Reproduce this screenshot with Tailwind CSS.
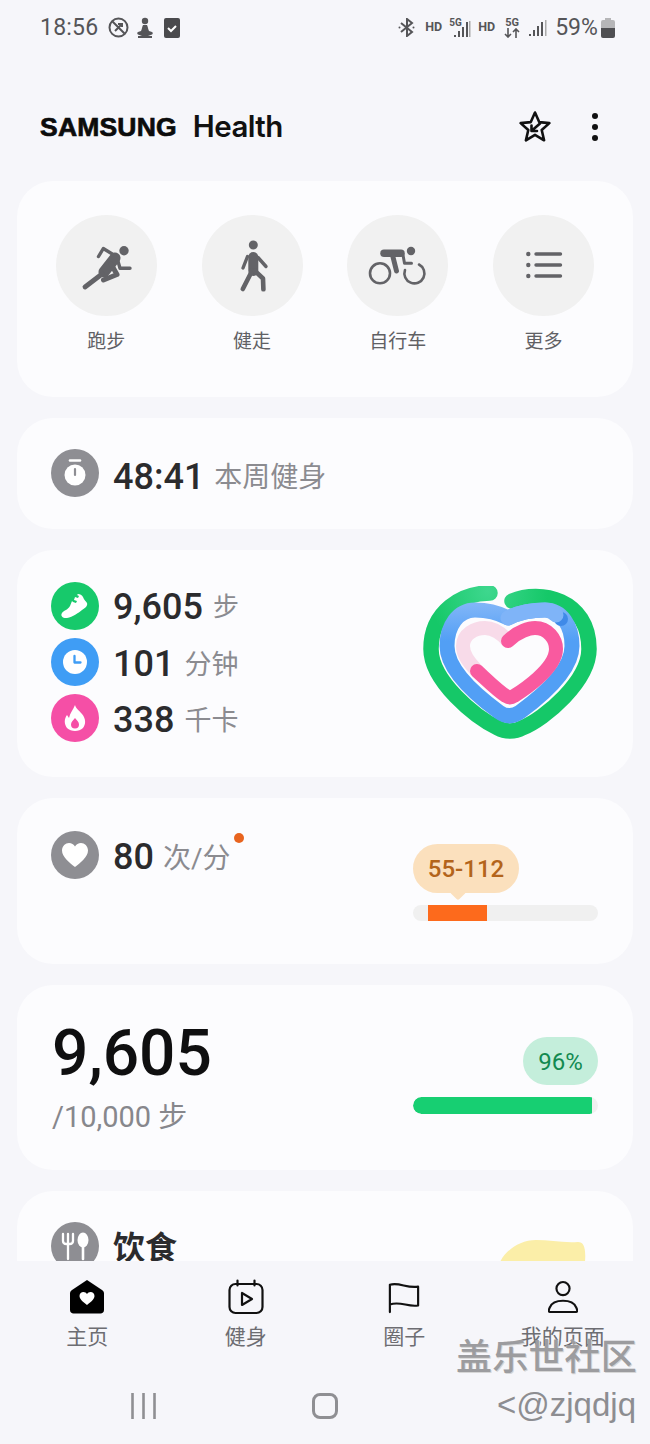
<!doctype html>
<html lang="zh">
<head>
<meta charset="utf-8">
<script src="https://cdn.jsdelivr.net/npm/@tailwindcss/browser@4"></script>
</head>
<body class="m-0">
<div class="relative flex flex-col w-[650px] h-[1444px] overflow-hidden bg-[#f6f6fa] font-['Roboto','Noto_Sans_CJK_SC',sans-serif]">

  <!-- status bar -->
  <div class="h-[55px] shrink-0 flex items-center pl-[40px] text-[#555558]">
    <span class="text-[23px] leading-none tracking-[0.2px]">18:56</span>
    <svg class="ml-[10px]" width="21" height="21" viewBox="0 0 21 21" fill="none" stroke="#555558" stroke-width="2"><circle cx="10.5" cy="10.5" r="9"/><path d="M4.5 4.5l12 12M7 14l7-7M10 7l4 0 0 3"/></svg>
    <svg class="ml-[6px]" width="20" height="21" viewBox="0 0 20 21" fill="#555558"><circle cx="10" cy="4" r="3.200"/><path d="M8 8h4c1 2 1 4 2 6l3 1c1 .5 1 2 0 2.500L13 19h4v2H3v-2h4l-4-1.500c-1-.5-1-2 0-2.500l3-1c1-2 1-4 2-6z"/></svg>
    <svg class="ml-[9px]" width="16" height="20" viewBox="0 0 16 20"><rect width="16" height="20" rx="2" fill="#4a4a4d"/><path d="M4 10l3 3 5-5" stroke="#fff" stroke-width="2" fill="none"/></svg>

    <svg class="ml-[218px]" width="17" height="19" viewBox="0 0 17 19" fill="none" stroke="#555558" stroke-width="2"><path d="M3 5l11 9-5 4V1l5 4-11 9"/><circle cx="1.5" cy="9.5" r="1" fill="#555558" stroke="none"/><circle cx="15.5" cy="9.5" r="1" fill="#555558" stroke="none"/></svg>
    <span class="ml-[10px] text-[12.5px] leading-none font-bold">HD</span>
    <div class="ml-[7px] relative w-[22px] h-[20px]">
      <span class="absolute left-0 top-0 text-[10px] leading-none font-bold">5G</span>
      <svg class="absolute left-0 top-0" width="22" height="20" viewBox="0 0 22 20" fill="#555558"><rect x="5" y="17" width="2" height="2"/><rect x="9" y="13" width="2" height="6"/><rect x="13" y="9" width="2" height="10"/><rect x="17" y="4" width="2" height="15"/><rect x="20" y="3" width="1.5" height="16" fill="#aaa"/></svg>
    </div>
    <span class="ml-[7px] text-[12.5px] leading-none font-bold">HD</span>
    <div class="ml-[9px] w-[16px] h-[20px] flex flex-col items-center">
      <span class="text-[11px] leading-[10px] font-bold">5G</span>
      <svg width="16" height="10" viewBox="0 0 16 10" fill="none" stroke="#555558" stroke-width="1.6"><path d="M4 0v9M1 6l3 3 3-3M12 10V1M9 4l3-3 3 3"/></svg>
    </div>
    <svg class="ml-[9px]" width="18" height="18" viewBox="0 0 18 18" fill="#555558"><rect x="0" y="15" width="2" height="2"/><rect x="4" y="11" width="2" height="6"/><rect x="8" y="7" width="2" height="10"/><rect x="12" y="3" width="2" height="14"/><rect x="16" y="1" width="1.5" height="16" fill="#aaa"/></svg>
    <span class="ml-[8px] text-[23px] leading-none">59%</span>
    <svg class="ml-[3px]" width="14" height="20" viewBox="0 0 14 20"><path d="M4 0h6v2h2a2 2 0 0 1 2 2v6H0V4a2 2 0 0 1 2-2h2z" fill="#b6b6b8"/><path d="M0 10h14v8a2 2 0 0 1-2 2H2a2 2 0 0 1-2-2z" fill="#4f4f52"/></svg>
  </div>

  <!-- header -->
  <div class="h-[126px] shrink-0 flex items-center pl-[40px] pt-[18px]">
    <span class="text-[26.5px] leading-none font-bold tracking-[0.2px] text-[#0c0c0c] font-['Liberation_Sans',sans-serif] [-webkit-text-stroke:0.7px_#0c0c0c]">SAMSUNG</span>
    <span class="ml-[16px] text-[29.5px] leading-none font-semibold text-[#111] font-['Inter',sans-serif] tracking-[-0.6px]">Health</span>
    <svg class="ml-[235px]" width="34" height="34" viewBox="0 0 34 34" fill="none" stroke="#111" stroke-width="2.6" stroke-linejoin="round" stroke-linecap="round"><path d="M17 2.5l4.2 9.6 10.2 1-7.7 6.9 2.4 10.3L17 24.8l-9.1 5.5 2.4-10.3-7.7-6.9 10.2-1z"/><path d="M22 13.500l-8 7M13.500 15.500v5.500h5.500"/></svg>
    <svg class="ml-[39px]" width="8" height="30" viewBox="0 0 8 30" fill="#111"><circle cx="4" cy="4" r="3"/><circle cx="4" cy="15" r="3"/><circle cx="4" cy="26" r="3"/></svg>
  </div>

  <!-- scrolling cards -->
  <main class="flex-1 min-h-0 overflow-hidden px-[17px] flex flex-col gap-[21px]">

    <!-- quick actions -->
    <section class="shrink-0 h-[216px] rounded-[36px] bg-[#fcfcfe] px-[16.5px] pt-[34px] grid grid-cols-4">
      <div class="flex flex-col items-center">
        <div class="w-[101px] h-[101px] rounded-full bg-[#f1f1f1]">
          <svg width="101" height="101" viewBox="0 0 101 101" fill="none" stroke="#636367" stroke-linecap="round" stroke-linejoin="round"><circle cx="68" cy="35.7" r="4.7" fill="#636367" stroke="none"/><path d="M42.500 41.500l4.800-8 13.400 8.200 3.300 11.600H74" stroke-width="3.400"/><path d="M59 43L48 57" stroke-width="11"/><path d="M46 59L29 72" stroke-width="4.800"/><path d="M55 49l6 10.500-13.500 5.500" stroke-width="5"/></svg>
        </div>
        <span class="mt-[14px] text-[19px] leading-[24px] text-[#606064]">跑步</span>
      </div>
      <div class="flex flex-col items-center">
        <div class="w-[101px] h-[101px] rounded-full bg-[#f1f1f1]">
          <svg width="101" height="101" viewBox="0 0 101 101" fill="none" stroke="#636367" stroke-linecap="round" stroke-linejoin="round"><circle cx="51.3" cy="30" r="4.5" fill="#636367" stroke="none"/><path d="M51.300 42v14" stroke-width="10"/><path d="M45.500 41.500L41 53" stroke-width="3.400"/><path d="M56 42.500L64 51.500" stroke-width="3.400"/><path d="M50 56L40.800 74" stroke-width="4.600"/><path d="M53 56l8 7.500.4 10.800" stroke-width="4.600"/></svg>
        </div>
        <span class="mt-[14px] text-[19px] leading-[24px] text-[#606064]">健走</span>
      </div>
      <div class="flex flex-col items-center">
        <div class="w-[101px] h-[101px] rounded-full bg-[#f1f1f1]">
          <svg width="101" height="101" viewBox="0 0 101 101" fill="none" stroke="#636367" stroke-linecap="round" stroke-linejoin="round"><circle cx="64" cy="36" r="4.200" fill="#636367" stroke="none"/><circle cx="33" cy="58.300" r="10" stroke-width="2.600"/><path d="M72 49.500A10 10 0 1 1 58 55" stroke-width="2.600"/><path d="M37 38.300h17" stroke-width="7.500"/><path d="M56 40l1.500 8.300h7" stroke-width="3"/><path d="M46 42l3.500 14" stroke-width="5"/></svg>
        </div>
        <span class="mt-[14px] text-[19px] leading-[24px] text-[#606064]">自行车</span>
      </div>
      <div class="flex flex-col items-center">
        <div class="w-[101px] h-[101px] rounded-full bg-[#f1f1f1]">
          <svg width="101" height="101" viewBox="0 0 101 101" fill="#636367" stroke="#636367" stroke-linecap="round"><circle cx="35.3" cy="39" r="2.200" stroke="none"/><circle cx="35.3" cy="50" r="2.200" stroke="none"/><circle cx="35.3" cy="61" r="2.200" stroke="none"/><path d="M43 39h24.500M43 50h24.500M43 61h24.500" stroke-width="3.400"/></svg>
        </div>
        <span class="mt-[14px] text-[19px] leading-[24px] text-[#606064]">更多</span>
      </div>
    </section>

    <!-- weekly workout -->
    <section class="shrink-0 h-[111px] rounded-[36px] bg-[#fcfcfe] pl-[34px] pt-[31px]">
      <div class="flex items-center h-[48px]">
        <div class="w-[48px] h-[48px] rounded-full bg-[#8e8e93] flex items-center justify-center">
          <svg width="26" height="28" viewBox="0 0 26 28"><path d="M8 1.500h10" stroke="#fff" stroke-width="2.600" stroke-linecap="round"/><circle cx="13" cy="16" r="10.500" fill="#fff"/><path d="M13 10v6" stroke="#8e8e93" stroke-width="2.200" stroke-linecap="round"/></svg>
        </div>
        <span class="ml-[14px] pt-[8px] text-[36px] leading-none font-medium text-[#2b2b2d]">48:41</span>
        <span class="ml-[10px] pt-[10px] text-[28px] leading-none text-[#8b8b90]">本周健身</span>
      </div>
    </section>

    <!-- activity -->
    <section class="shrink-0 h-[227px] rounded-[36px] bg-[#fcfcfe] pl-[34px] pr-[36px] pb-[3px] flex items-center justify-between">
      <div class="flex flex-col gap-[8px]">
        <div class="flex items-center h-[48px]">
          <div class="w-[48px] h-[48px] rounded-full bg-[#17c96b] flex items-center justify-center">
            <svg width="30" height="26" viewBox="0 0 30 26" fill="#fff"><path d="M18 1c2 0 4 1 5 3 1 3 3 4 4 6 1 3-2 5-5 7-4 3-9 7-15 8-4 .500-7-2-5-5 2-3 6-3 8-7l2-5 1 1 3 1 1-2-3-1 1-3 3 1 1-2-2-1z"/></svg>
          </div>
          <span class="ml-[14px] pt-[2px] text-[36px] leading-none font-medium text-[#2b2b2d]">9,605</span>
          <span class="ml-[10px] pt-[2px] text-[26px] leading-none text-[#8b8b90]">步</span>
        </div>
        <div class="flex items-center h-[48px]">
          <div class="w-[48px] h-[48px] rounded-full bg-[#3f9df5] flex items-center justify-center">
            <svg width="26" height="26" viewBox="0 0 26 26"><circle cx="13" cy="13" r="12" fill="#fff"/><path d="M12.500 7v6.500h6" fill="none" stroke="#3f9df5" stroke-width="2.300" stroke-linecap="round" stroke-linejoin="round"/></svg>
          </div>
          <span class="ml-[14px] pt-[4px] text-[36px] leading-none font-medium text-[#2b2b2d]">101</span>
          <span class="ml-[10px] pt-[6px] text-[27px] leading-none text-[#8b8b90]">分钟</span>
        </div>
        <div class="flex items-center h-[48px]">
          <div class="w-[48px] h-[48px] rounded-full bg-[#f54fa6] flex items-center justify-center">
            <svg width="24" height="28" viewBox="0 0 24 28"><path d="M12 1c1 4 4 5 7 9 4 5 4 10 1 14-4 4-12 4-16 0-3-4-3-9 0-13l2 3c1-5 4-8 6-13z" fill="#fff"/><path d="M12 14c2 2.500 4 4 4 6.500a4 4 0 0 1-8 0c0-2.500 2-4 4-6.500z" fill="#f54fa6"/></svg>
          </div>
          <span class="ml-[14px] pt-[4px] text-[36px] leading-none font-medium text-[#2b2b2d]">338</span>
          <span class="ml-[10px] pt-[6px] text-[27px] leading-none text-[#8b8b90]">千卡</span>
        </div>
      </div>
      <svg width="174" height="153" viewBox="423 585 174 153" fill="none" stroke-linecap="round" stroke-linejoin="round">
        <defs>
          <radialGradient id="gr" gradientUnits="userSpaceOnUse" cx="488" cy="590" r="60"><stop offset="0" stop-color="#3ed78e"/><stop offset="1" stop-color="#15c868"/></radialGradient>
          <linearGradient id="bl" gradientUnits="userSpaceOnUse" x1="0" y1="602" x2="0" y2="640"><stop offset="0" stop-color="#82b6f8"/><stop offset="1" stop-color="#529ff5"/></linearGradient>
        </defs>
        <path d="M490 592C462 592 431 610 431 648C431 680 475 716 498 727C505 731 515 731 522 727C545 718 589 680 589 648C589 598 540 588 512 600" stroke="url(#gr)" stroke-width="15.500"/>
        <path d="M508 617C520 611 535 609 545 609C562 609 572 625 572 645C572 672 535 700 520 711C513 716 506 716 499 711C484 700 447 672 447 645C447 625 458 609 475 609C485 609 497 611 508 617Z" stroke="url(#bl)" stroke-width="15"/>
        <circle cx="561" cy="618" r="7" fill="#3f8ae8"/>
        <path d="M508 617C520 611 535 609 545 609C549 609 553 611 556 614" stroke="#7fb4f8" stroke-width="15"/>
        <path d="M477 670C470 662 463 655 463 645C463 633 475 627 485 627C495 627 502 633 508 640" stroke="#f8dbe9" stroke-width="14"/>
        <path d="M508 640C518 630 530 627 535 627C548 627 556 638 556 648C556 668 522 690 514 695C511 697 509 697 506 695C498 690 490 682 477 670" stroke="#f95a9f" stroke-width="14"/>
      </svg>
    </section>

    <!-- heart rate -->
    <section class="shrink-0 h-[166px] rounded-[36px] bg-[#fcfcfe] pl-[34px] pr-[35px] flex justify-between">
      <div class="pt-[33px] flex items-start">
        <div class="w-[48px] h-[48px] rounded-full bg-[#8e8e93] flex items-center justify-center">
          <svg width="28" height="26" viewBox="0 0 28 26" fill="#fff"><path d="M14 25C9 21 1 15 1 8.500 1 4 4.500 1 8 1c2.500 0 4.800 1.300 6 3.500C15.200 2.300 17.500 1 20 1c3.500 0 7 3 7 7.500C27 15 19 21 14 25z"/></svg>
        </div>
        <div class="relative flex items-center h-[48px]">
          <span class="ml-[14px] pt-[4px] text-[36px] leading-none font-medium text-[#2b2b2d]">80</span>
          <span class="ml-[9px] pt-[8px] text-[28px] leading-none text-[#8b8b90]">次/分</span>
          <span class="absolute -right-[14px] top-[2px] w-[10px] h-[10px] rounded-full bg-[#e8641f]"></span>
        </div>
      </div>
      <div class="w-[185px] pt-[46px]">
        <div class="relative w-[106px] h-[49px] rounded-full bg-[#fbe0bd] flex items-center justify-center text-[24px] leading-none font-medium text-[#b3641b]">
          55-112
          <span class="absolute left-[39px] bottom-[-5px] w-[12px] h-[12px] rotate-45 rounded-[2px] bg-[#fbe0bd]"></span>
        </div>
        <div class="mt-[12px] h-[16px] rounded-full bg-[#f0f0f0] pl-[15px]">
          <div class="h-full w-[59px] bg-[#fd6a1c]"></div>
        </div>
      </div>
    </section>

    <!-- steps -->
    <section class="shrink-0 h-[185px] rounded-[36px] bg-[#fcfcfe] pl-[35px] pr-[35px] flex justify-between">
      <div class="pt-[37px]">
        <div class="text-[64px] leading-[64px] font-medium text-[#0f0f10]">9,605</div>
        <div class="mt-[13px] text-[29px] leading-[36px] text-[#87878c]">/10,000 步</div>
      </div>
      <div class="w-[185px] pt-[52px] flex flex-col items-end">
        <div class="w-[75px] h-[48px] pt-[2px] rounded-full bg-[#c4eedb] flex items-center justify-center text-[24px] leading-none font-normal text-[#128a50]">96%</div>
        <div class="mt-[12px] w-full h-[17px] rounded-full bg-[#f0f0f0] overflow-hidden">
          <div class="h-full w-[179px] rounded-l-full bg-[#17cf72]"></div>
        </div>
      </div>
    </section>

    <!-- food -->
    <section class="relative shrink-0 h-[120px] rounded-[36px] bg-[#fcfcfe] pl-[34px] pt-[31px]">
      <div class="flex items-center h-[48px]">
        <div class="w-[48px] h-[48px] rounded-full bg-[#8e8e93] flex items-center justify-center">
          <svg width="30" height="30" viewBox="0 0 30 30" fill="none" stroke="#fff" stroke-linecap="round"><path d="M3 3v7c0 2 1.500 3 3.500 3h3c2 0 3.500-1 3.500-3V3M8 3v25" stroke-width="2.300"/><ellipse cx="23" cy="9" rx="5.500" ry="7.500" fill="#fff" stroke="none"/><path d="M23 14v14" stroke-width="2.600"/></svg>
        </div>
        <span class="ml-[14px] pt-[4px] text-[32px] leading-none font-bold text-[#2b2b2d]">饮食</span>
      </div>
      <svg class="absolute left-[483px] top-[49px]" width="86" height="22" viewBox="0 0 86 22" fill="#fbeea8"><path d="M0 22C6 10 20 0 36 0c14 0 26 3 42 2 6 0 8 6 7 20z"/></svg>
    </section>
  </main>

  <!-- bottom navigation -->
  <nav class="shrink-0 h-[95px] px-[8px] pt-[18px] grid grid-cols-4 bg-[#f6f6fa]">
    <div class="flex flex-col items-center">
      <svg class="h-[36px]" width="36" height="36" viewBox="0 0 36 36"><path d="M18 1L33 11c1.300.900 2 2 2 3.500V31c0 2-1.500 3.500-3.500 3.500h-27C2.500 34.500 1 33 1 31V14.500C1 13 1.700 11.900 3 11z" fill="#000"/><path d="M18 26c-3-2.500-7.500-5.500-7.500-9 0-2.400 1.900-4 3.900-4 1.500 0 2.900.8 3.600 2.100.7-1.300 2.100-2.100 3.600-2.100 2 0 3.900 1.600 3.900 4 0 3.500-4.500 6.500-7.500 9z" fill="#fff"/></svg>
      <span class="mt-[9px] text-[21px] leading-[26px] text-[#6d6d72]">主页</span>
    </div>
    <div class="flex flex-col items-center">
      <svg class="h-[36px]" width="36" height="36" viewBox="0 0 36 36" fill="none" stroke="#111" stroke-width="2.200" stroke-linecap="round" stroke-linejoin="round"><rect x="1.500" y="5" width="33" height="29" rx="6"/><path d="M9.500 1.500v5M26.500 1.500v5"/><path d="M14 14v12l10-6z"/></svg>
      <span class="mt-[9px] text-[21px] leading-[26px] text-[#6d6d72]">健身</span>
    </div>
    <div class="flex flex-col items-center">
      <svg class="h-[36px]" width="32" height="36" viewBox="0 0 34 36" fill="none" stroke="#111" stroke-width="2.300" stroke-linecap="round" stroke-linejoin="round"><path d="M2 34V5c10-3 18 4 30 2v20c-11 2-19-5-30-1"/></svg>
      <span class="mt-[9px] text-[21px] leading-[26px] text-[#6d6d72]">圈子</span>
    </div>
    <div class="flex flex-col items-center">
      <svg class="h-[36px]" width="30" height="36" viewBox="0 0 32 36" fill="none" stroke="#111" stroke-width="2.300" stroke-linejoin="round"><circle cx="16" cy="9" r="7"/><path d="M2 34c-2 0-1-3 0-5 2-5 8-7 14-7s12 2 14 7c1 2 2 5 0 5z"/></svg>
      <span class="mt-[9px] text-[21px] leading-[26px] text-[#6d6d72]">我的页面</span>
    </div>
  </nav>

  <!-- system navigation -->
  <div class="shrink-0 h-[88px] pt-[37px] pl-[131px] flex items-start">
    <svg width="25" height="26" viewBox="0 0 25 26" stroke="#8f8f93" stroke-width="2.600"><path d="M1.500 0v26M12.500 0v26M23.500 0v26"/></svg>
    <div class="ml-[156px] w-[26px] h-[26px] rounded-[8px] border-[3px] border-[#8f8f93]"></div>
  </div>

  <!-- watermark over the navigation -->
  <div class="absolute left-[456px] top-[1336px] text-[36px] leading-[44px] font-medium tracking-[0.2px] text-[#9c9c9f] [text-shadow:1px_1px_0_#d6d6d6]">盖乐世社区</div>
  <div class="absolute right-[14px] top-[1383px] text-[33px] leading-[44px] text-[#8d8d91] font-['Liberation_Sans',sans-serif]">&lt;@zjqdjq</div>
</div>
</body>
</html>
